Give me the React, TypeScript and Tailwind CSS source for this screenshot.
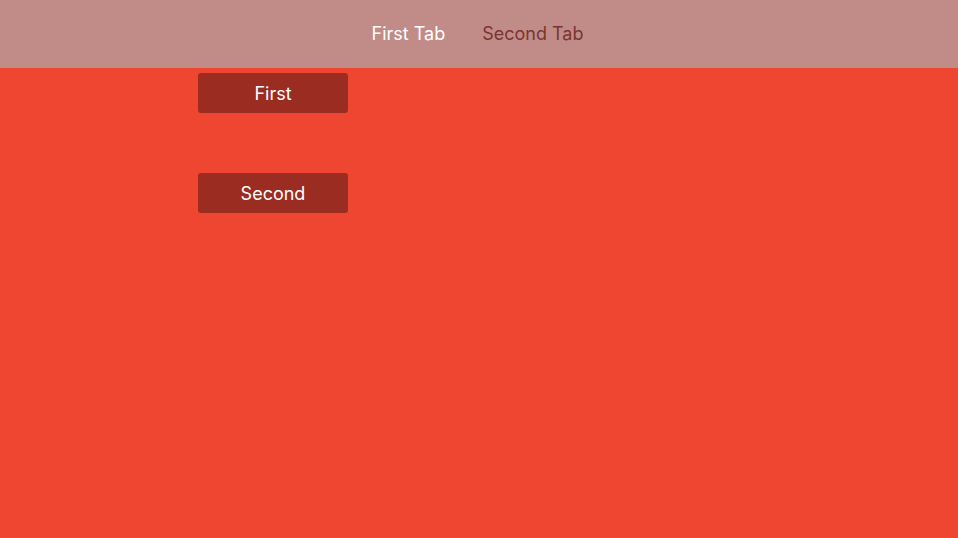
export default function App() {
  return (
    <div className="min-h-[538px] w-full bg-[#ee4630] flex flex-col" style={{ fontFamily: 'Inter, "Noto Sans", sans-serif' }}>
      <header className="h-[68px] bg-[#c18c87] flex items-center justify-center gap-[37px] pb-[2px] pr-[3px]">
        <span className="text-[18px] text-white">First Tab</span>
        <span className="text-[18px] text-[#7a3530]">Second Tab</span>
      </header>
      <div className="pl-[198px] pt-[5px] flex flex-col gap-[60px]">
        <button className="w-[150px] h-[40px] rounded-[3px] bg-[#9a2c22] text-white text-[18px]">First</button>
        <button className="w-[150px] h-[40px] rounded-[3px] bg-[#9a2c22] text-white text-[18px]">Second</button>
      </div>
    </div>
  );
}
